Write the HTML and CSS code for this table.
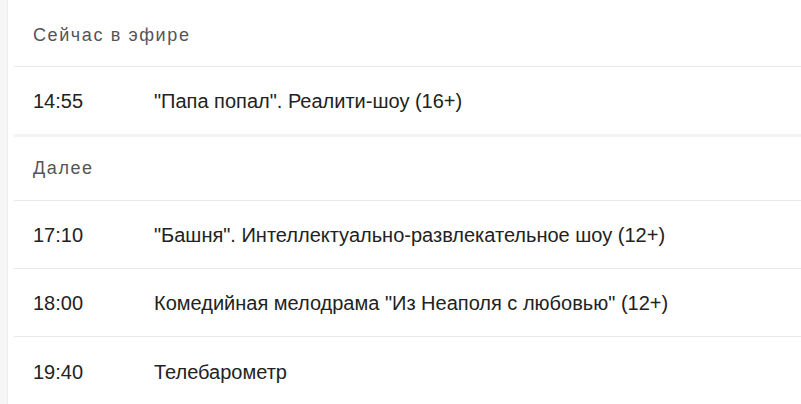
FILE: index.html
```html
<!DOCTYPE html>
<html lang="ru">
<head>
<meta charset="utf-8">
<link rel="stylesheet" href="styles.css">
</head>
<body>
<div class="page">
  <div class="rail"></div>
  <div class="schedule">
    <div class="section-title first">Сейчас в эфире</div>
    <div class="row current"><span class="time">14:55</span><span class="title">"Папа попал". Реалити-шоу (16+)</span></div>
    <div class="section-title">Далее</div>
    <div class="row"><span class="time">17:10</span><span class="title">"Башня". Интеллектуально-развлекательное шоу (12+)</span></div>
    <div class="row"><span class="time">18:00</span><span class="title">Комедийная мелодрама "Из Неаполя с любовью" (12+)</span></div>
    <div class="row last"><span class="time">19:40</span><span class="title">Телебарометр</span></div>
  </div>
</div>
</body>
</html>
```

FILE: styles.css
```css
html, body {
  margin: 0;
  padding: 0;
  background: #fff;
}
body {
  font-family: "Liberation Sans", Arial, sans-serif;
  color: #222;
}
.page {
  display: flex;
  min-height: 404px;
}
.rail {
  width: 7px;
  background: #f6f6f6;
  border-right: 1px solid #ececec;
  flex: none;
}
.schedule {
  flex: 1;
  margin-left: 6px;
}
.section-title {
  height: 64px;
  box-sizing: border-box;
  padding-left: 19px;
  display: flex;
  align-items: center;
  font-size: 18px;
  letter-spacing: 1.6px;
  color: #555;
  border-bottom: 1px solid #e8e8e8;
}
.section-title.first {
  height: 67px;
  padding-top: 4px;
}
.row {
  height: 68px;
  box-sizing: border-box;
  display: flex;
  align-items: center;
  padding-left: 19px;
  padding-top: 2px;
  font-size: 20px;
  border-bottom: 1px solid #e8e8e8;
}
.row.current {
  height: 70px;
  border-bottom: 3px solid #f3f3f3;
}
.row.last {
  border-bottom: none;
}
.time {
  width: 121px;
  flex: none;
}
```
